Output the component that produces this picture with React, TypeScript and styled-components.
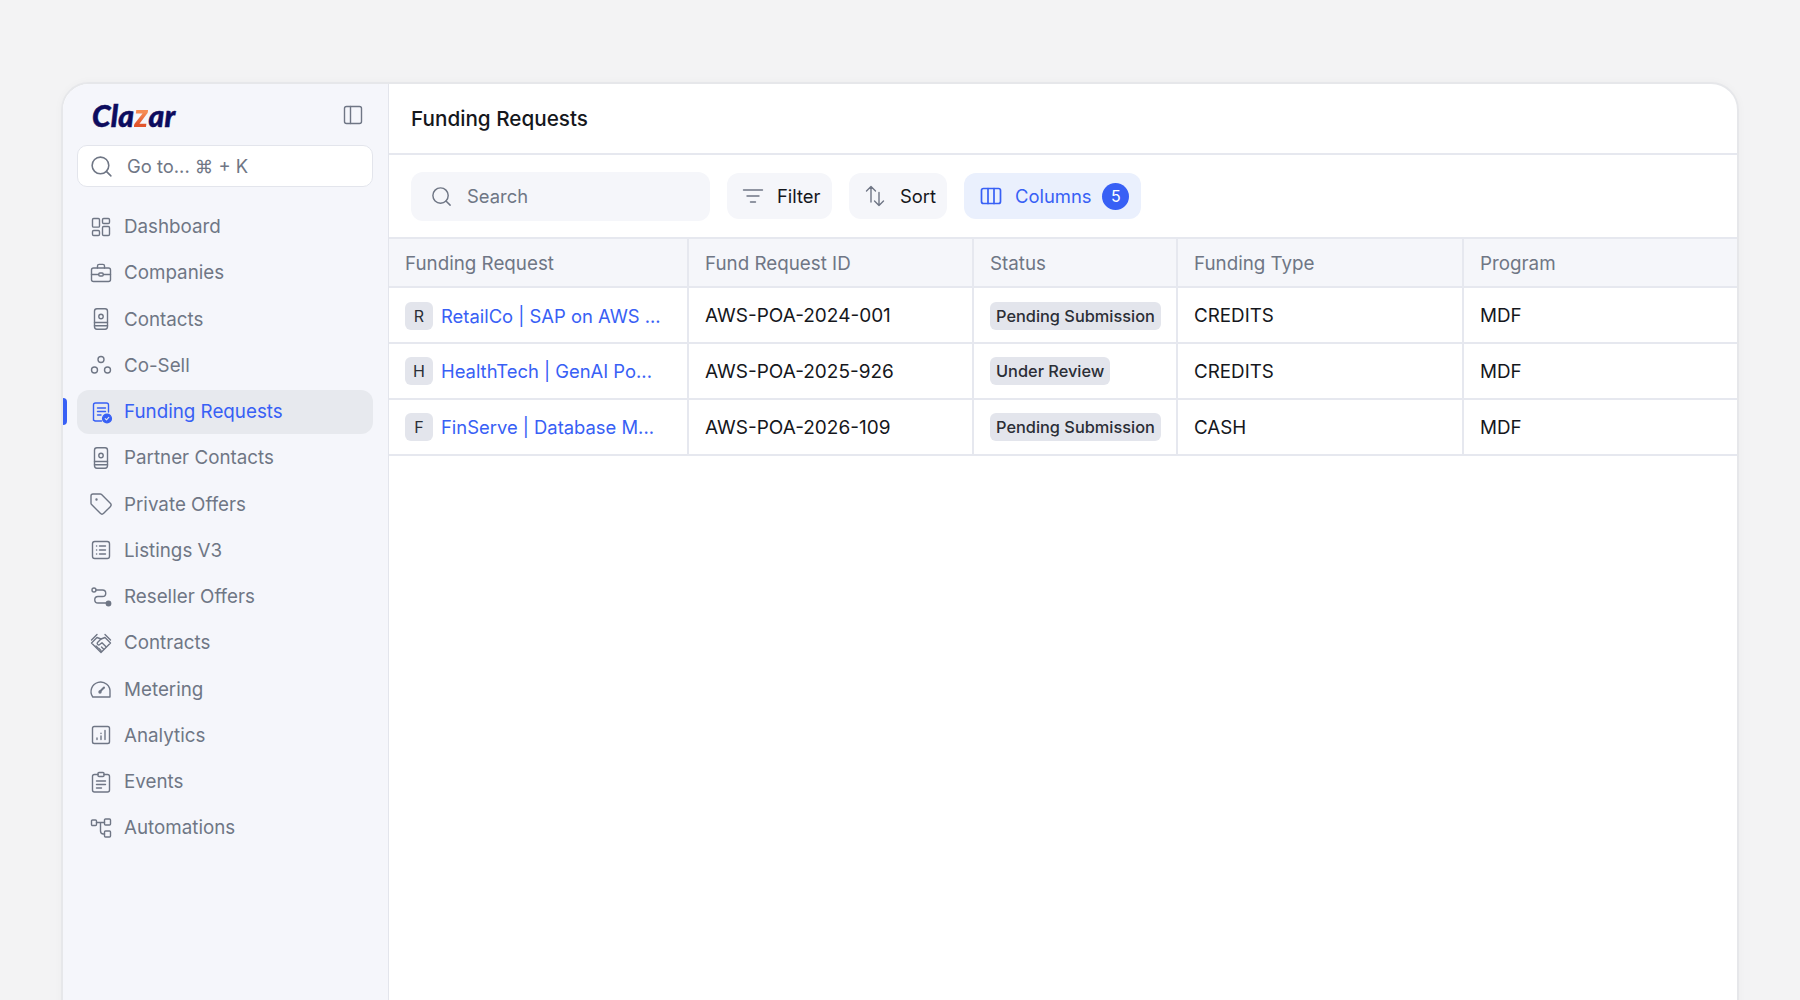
import React from 'react';
import styled, { createGlobalStyle } from 'styled-components';
import { Search, Tag } from 'lucide-react';

const GlobalStyle = createGlobalStyle`
  html, body {
    margin: 0;
    height: 1000px;
    overflow: hidden;
    background: #f3f3f4;
    font-family: Inter, "Noto Sans", sans-serif;
  }
  * { box-sizing: border-box; }
`;

const Page = styled.div`
  height: 1000px;
  padding: 82px 61px 0;
  overflow: hidden;
`;

const Card = styled.div`
  display: flex;
  height: 960px;
  background: #fff;
  border: 2px solid #e6e7ea;
  border-radius: 28px 28px 0 0;
  overflow: hidden;
  box-shadow: 0 0 8px rgba(0, 0, 0, 0.03);
`;

const Sidebar = styled.aside`
  position: relative;
  flex: 0 0 326px;
  background: #f5f6fb;
  border-right: 1px solid #e3e5ec;
  padding: 0 15px 0 14px;
`;

const Brand = styled.div`
  display: flex;
  align-items: center;
  justify-content: space-between;
  height: 61px;
  padding: 0 8px 0 15px;
  color: #6f7685;
`;

const Logo = styled.div`
  font-family: Lato, sans-serif;
  font-weight: 900;
  font-style: italic;
  font-size: 30px;
  letter-spacing: 0.2px;
  line-height: 1;
  color: #0d0c5e;
  -webkit-text-stroke: 0.5px #0d0c5e;
`;

const LogoZ = styled.span`
  position: relative;
  font-size: 32px;
  -webkit-text-stroke: 0;
  background: linear-gradient(180deg, #f58a52 45%, #e2552c 75%);
  -webkit-background-clip: text;
  background-clip: text;
  color: transparent;
`;

const GoTo = styled.div`
  display: flex;
  align-items: center;
  gap: 13px;
  height: 42px;
  padding: 0 11px;
  background: #fff;
  border: 1px solid #e3e5ec;
  border-radius: 10px;
  font-size: 18.4px;
  color: #6f7685;
`;

const Nav = styled.nav`
  display: flex;
  flex-direction: column;
  gap: 2.25px;
  margin-top: 17.5px;
`;

const NavItem = styled.div<{ $active?: boolean }>`
  position: relative;
  display: flex;
  align-items: center;
  gap: 11px;
  height: 44px;
  padding-left: 11px;
  border-radius: 12px;
  font-size: 18.8px;
  color: ${(p) => (p.$active ? '#3860f5' : '#6f7685')};
  background: ${(p) => (p.$active ? '#e7e9ee' : 'transparent')};
  svg { flex: none; margin-left: 1px; }
`;

const ActiveMark = styled.span`
  position: absolute;
  left: -15px;
  top: 8px;
  width: 5px;
  height: 27px;
  border-radius: 0 4px 4px 0;
  background: #3860f5;
`;

const Main = styled.main`
  flex: 1;
  min-width: 0;
`;

const Header = styled.header`
  display: flex;
  align-items: center;
  height: 71px;
  padding: 0 22px;
  border-bottom: 2px solid #e6e8ef;
  font-size: 20.7px;
  font-weight: 500;
  color: #15171c;
`;

const Toolbar = styled.div`
  display: flex;
  align-items: center;
  gap: 17px;
  height: 82px;
  padding: 0 22px;
`;

const SearchBox = styled.div`
  display: flex;
  align-items: center;
  gap: 14px;
  width: 299px;
  height: 49px;
  padding: 0 19px;
  background: #f5f6fa;
  border-radius: 12px;
  font-size: 18.4px;
  color: #6f7685;
`;

const ToolButton = styled.div<{ $width: number; $inset?: number; $active?: boolean }>`
  display: flex;
  align-items: center;
  gap: 12px;
  width: ${(p) => p.$width}px;
  height: 46px;
  padding-left: ${(p) => p.$inset ?? 15}px;
  border-radius: 12px;
  font-size: 18.4px;
  color: ${(p) => (p.$active ? '#3860f5' : '#15171c')};
  background: ${(p) => (p.$active ? '#eaf0fd' : '#f5f6fa')};
  svg { color: ${(p) => (p.$active ? '#3860f5' : '#6f7685')}; flex: none; }
`;

const CountBadge = styled.span`
  display: flex;
  align-items: center;
  justify-content: center;
  width: 27px;
  height: 27px;
  margin-left: -1px;
  border-radius: 50%;
  background: #3860f5;
  color: #fff;
  font-size: 16px;
`;

const Row = styled.div<{ $head?: boolean }>`
  display: grid;
  grid-template-columns: 300px 285px 204px 286px 1fr;
  height: ${(p) => (p.$head ? '51px' : '56px')};
  margin-bottom: ${(p) => (p.$head ? '0' : '-0.2px')};
  background: ${(p) => (p.$head ? '#f5f6fa' : '#fff')};
  color: ${(p) => (p.$head ? '#6f7685' : '#15171c')};
  border-top: ${(p) => (p.$head ? '2px solid #e6e8ef' : '0')};
  border-bottom: 2px solid #e6e8ef;
  font-size: 18.8px;
`;

const Cell = styled.div`
  display: flex;
  align-items: center;
  gap: 8px;
  min-width: 0;
  padding: 1px 16px 0;
  border-right: 2px solid #e6e8ef;
  &:last-child { border-right: 0; }
`;

const Initial = styled.span`
  display: flex;
  align-items: center;
  justify-content: center;
  flex: none;
  width: 28px;
  height: 28px;
  border-radius: 6px;
  background: #e3e5ec;
  font-size: 16px;
  font-weight: 400;
  color: #2b2e36;
`;

const RequestLink = styled.a`
  color: #3860f5;
  font-size: 18.4px;
  white-space: nowrap;
`;

const RequestId = styled.span`
  font-size: 19px;
`;

const Status = styled.span`
  display: inline-flex;
  align-items: center;
  height: 28px;
  padding: 0 6px;
  border-radius: 6px;
  background: #e3e5ec;
  font-size: 16.35px;
  font-weight: 500;
  color: #2b2e36;
  white-space: nowrap;
`;

const Svg = ({ children, width = 1.4 }: { children: React.ReactNode; width?: number }) => (
  <svg
    width={24}
    height={24}
    viewBox="0 0 24 24"
    fill="none"
    stroke="currentColor"
    strokeWidth={width}
    strokeLinecap="round"
    strokeLinejoin="round"
  >
    {children}
  </svg>
);

const ContactIcon = () => (
  <Svg>
    <rect x="5.5" y="1.8" width="13" height="20.4" rx="2.4" />
    <circle cx="12" cy="9.5" r="2.2" />
    <path d="M5.5 15.500h13M5.500 18.800h13" />
  </Svg>
);

const icons: Record<string, React.ReactNode> = {
  Dashboard: (
    <Svg>
      <rect x="3.5" y="3.5" width="7" height="8.6" rx="1.2" />
      <rect x="13.5" y="3.5" width="7" height="5" rx="1.2" />
      <rect x="13.5" y="11.5" width="7" height="9" rx="1.2" />
      <rect x="3.5" y="15.5" width="7" height="5" rx="1.2" />
    </Svg>
  ),
  Companies: (
    <Svg>
      <rect x="2.500" y="7" width="19" height="13.500" rx="2" />
      <path d="M8.500 7V5a1.600 1.600 0 0 1 1.600-1.600h3.800A1.600 1.600 0 0 1 15.500 5v2" />
      <path d="M2.500 13.500h7M14.500 13.500h7" />
      <rect x="9.800" y="12" width="4.400" height="3" rx="1" />
    </Svg>
  ),
  Contacts: <ContactIcon />,
  'Co-Sell': (
    <Svg>
      <circle cx="12" cy="6.500" r="3" />
      <circle cx="5.500" cy="17" r="3" />
      <circle cx="18.500" cy="17" r="3" />
    </Svg>
  ),
  'Funding Requests': (
    <Svg>
      <path d="M12.500 21H6.200l-1.700-.8V5a2 2 0 0 1 2-2h11a2 2 0 0 1 2 2v7" />
      <path d="M8.500 8h8M8.500 11.500h8M8.500 15h3.500" />
      <circle cx="18" cy="18.500" r="4.400" fill="currentColor" />
      <path d="M16.200 18.600l1.300 1.300 2.300-2.500" stroke="#e7e9ee" strokeWidth={1.1} />
    </Svg>
  ),
  'Partner Contacts': <ContactIcon />,
  'Private Offers': <Tag size={24} strokeWidth={1.4} />,
  'Listings V3': (
    <Svg>
      <rect x="3.500" y="3.500" width="17" height="17" rx="2.200" />
      <path d="M10.500 8h6M10.500 12h6M10.500 16h6M7.500 8h.2M7.500 12h.2M7.500 16h.2" />
    </Svg>
  ),
  'Reseller Offers': (
    <Svg>
      <circle cx="5" cy="5" r="2" />
      <path d="M7 5h6.500a3 3 0 0 1 0 6.500H9a3.200 3.200 0 0 0 0 6.500h8.500" />
      <circle cx="19.500" cy="18.500" r="2.200" fill="currentColor" />
    </Svg>
  ),
  Contracts: (
    <Svg>
      <path d="M12 21.500 2.500 12 8 6.500l4 1.500 4-1.500 5.500 5.500Z" />
      <path d="M12 8 8.500 11.500a1.500 1.500 0 0 0 2.200 2l2.300-1.800 4 4" />
      <path d="M8 3.500 2.500 9M16 3.500 21.500 9" />
      <path d="M14.500 18l-2-2M12 19.500l-2-2M7 15l2 2" />
    </Svg>
  ),
  Metering: (
    <Svg>
      <path d="M21 20H3.800A9.500 9.500 0 1 1 21 15.500V20Z" />
      <path d="M11 14.500 15 10.500" strokeWidth={2} />
      <circle cx="11" cy="15" r="1" fill="currentColor" />
    </Svg>
  ),
  Analytics: (
    <Svg>
      <rect x="3.500" y="3.500" width="17" height="17" rx="1.800" />
      <path d="M8 16.500v-1.500M12 16.500v-3.500M12 10.500v-.2M16 16.500v-9" />
    </Svg>
  ),
  Events: (
    <Svg>
      <path d="M9 4.500H5.500a2 2 0 0 0-2 2v13.500a2 2 0 0 0 2 2h13a2 2 0 0 0 2-2V6.500a2 2 0 0 0-2-2H15" />
      <rect x="9" y="2.500" width="6" height="4" rx="1" />
      <path d="M7.500 11h9M7.500 14.500h9M7.500 18h5" />
    </Svg>
  ),
  Automations: (
    <Svg>
      <rect x="2.500" y="4" width="5" height="5.500" rx="1" />
      <rect x="15.500" y="3" width="6" height="6" rx="1" />
      <rect x="15.500" y="15" width="6" height="6" rx="1" />
      <path d="M7.500 6.500h8M11.500 6.500V15a3 3 0 0 0 3 3h1" />
    </Svg>
  ),
};

const navLabels = Object.keys(icons);

const rows = [
  { initial: 'R', name: 'RetailCo | SAP on AWS ...', id: 'AWS-POA-2024-001', status: 'Pending Submission', type: 'CREDITS' },
  { initial: 'H', name: 'HealthTech | GenAI Po...', id: 'AWS-POA-2025-926', status: 'Under Review', type: 'CREDITS' },
  { initial: 'F', name: 'FinServe | Database M...', id: 'AWS-POA-2026-109', status: 'Pending Submission', type: 'CASH' },
];

export default function App() {
  return (
    <Page>
      <GlobalStyle />
      <Card>
        <Sidebar>
          <Brand>
            <Logo>
              Cla<LogoZ>z</LogoZ>ar
            </Logo>
            <Svg>
              <rect x="3.500" y="3.500" width="17" height="17" rx="2" />
              <path d="M9.500 3.500v17" />
            </Svg>
          </Brand>
          <GoTo>
            <Search size={25} strokeWidth={1.5} />
            Go to... ⌘ + K
          </GoTo>
          <Nav>
            {navLabels.map((label) => (
              <NavItem key={label} $active={label === 'Funding Requests'}>
                {label === 'Funding Requests' && <ActiveMark />}
                {icons[label]}
                {label}
              </NavItem>
            ))}
          </Nav>
        </Sidebar>
        <Main>
          <Header>Funding Requests</Header>
          <Toolbar>
            <SearchBox>
              <Search size={23} strokeWidth={1.5} />
              Search
            </SearchBox>
            <ToolButton $width={105} $inset={14}>
              <Svg>
                <path d="M2.500 6h19M6 12h12M9.500 18h5" />
              </Svg>
              Filter
            </ToolButton>
            <ToolButton $width={98}>
              <Svg>
                <path d="M7 18V2.500M2.500 7 7 2.500 11.500 7M15 8.500v13M10.500 17l4.500 4.500 4.500-4.500" />
              </Svg>
              Sort
            </ToolButton>
            <ToolButton $width={177} $active>
              <Svg width={1.7}>
                <rect x="2.500" y="4.500" width="19" height="15" rx="2" />
                <path d="M9 4.500v15M15 4.500v15" />
              </Svg>
              Columns
              <CountBadge>5</CountBadge>
            </ToolButton>
          </Toolbar>
          <Row $head>
            <Cell>Funding Request</Cell>
            <Cell>Fund Request ID</Cell>
            <Cell>Status</Cell>
            <Cell>Funding Type</Cell>
            <Cell>Program</Cell>
          </Row>
          {rows.map((row) => (
            <Row key={row.id}>
              <Cell>
                <Initial>{row.initial}</Initial>
                <RequestLink>{row.name}</RequestLink>
              </Cell>
              <Cell>
                <RequestId>{row.id}</RequestId>
              </Cell>
              <Cell>
                <Status>{row.status}</Status>
              </Cell>
              <Cell>{row.type}</Cell>
              <Cell>MDF</Cell>
            </Row>
          ))}
        </Main>
      </Card>
    </Page>
  );
}
